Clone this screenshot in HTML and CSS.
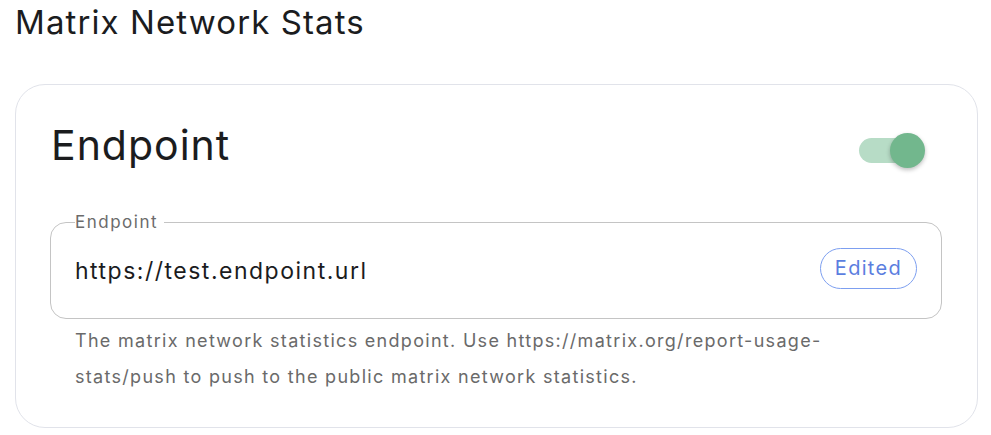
FILE: index.html
```html
<!DOCTYPE html>
<html lang="en">
<head>
  <meta charset="UTF-8" />
  <meta name="viewport" content="width=device-width, initial-scale=1.0"/>
  <title>Matrix Network Stats</title>
  <link rel="stylesheet" href="styles.css">
</head>
<body>
  <h1 class="page-title">Matrix Network Stats</h1>

  <div class="card">
    <div class="card-head">
      <h2>Endpoint</h2>
      <label class="switch">
        <input type="checkbox" checked />
        <span class="track"></span>
        <span class="thumb"></span>
      </label>
    </div>

    <fieldset class="field">
      <legend>Endpoint</legend>
      <div class="field-row">
        <span class="value">https://test.endpoint.url</span>
        <span class="chip">Edited</span>
      </div>
    </fieldset>
    <p class="helper">The matrix network statistics endpoint. Use https://matrix.org/report-usage-stats/push to push to the public matrix network statistics.</p>
  </div>
</body>
</html>
```

FILE: styles.css
```css
body {
  margin: 0;
  padding: 0 13px 0 15px;
  font-family: Inter, "Noto Sans", sans-serif;
  color: #1b1c1e;
  background: #fff;
}

.page-title {
  margin: 0;
  padding: 2px 0 0 0;
  font-size: 33px;
  font-weight: 400;
  line-height: 40px;
  letter-spacing: 1.1px;
}

.card {
  margin-top: 42px;
  border: 1px solid #e1e3ea;
  border-radius: 30px;
  padding: 24px 35px 32px 34px;
}

.card-head {
  display: flex;
  justify-content: space-between;
  align-items: center;
}

.card-head h2 {
  margin: 0;
  padding-left: 1px;
  font-size: 41px;
  font-weight: 400;
  line-height: 72px;
  letter-spacing: 1px;
}

.switch {
  position: relative;
  width: 66px;
  height: 36px;
  margin-right: 17px;
  margin-top: 12px;
}

.switch input {
  display: none;
}

.track {
  position: absolute;
  left: 0;
  top: 5px;
  width: 56px;
  height: 25px;
  border-radius: 13px;
  background: #b7dcc6;
}

.thumb {
  position: absolute;
  right: 0;
  top: 0;
  width: 35px;
  height: 35px;
  border-radius: 50%;
  background: #72b78d;
  box-shadow: 0 2px 4px rgba(0,0,0,0.25);
}

.field {
  margin: 31px 0 0 0;
  padding: 0 24px 0 24px;
  border: 1px solid #c4c4c4;
  border-radius: 16px;
  min-width: 0;
}

.field legend {
  padding: 0 6px 0 0;
  margin-left: 0;
  font-size: 17px;
  color: #6b6b6b;
  letter-spacing: 1.5px;
}

.field-row {
  display: flex;
  justify-content: space-between;
  align-items: center;
  height: 78px;
  padding-bottom: 8px;
}

.value {
  font-size: 23px;
  letter-spacing: 1.5px;
}

.chip {
  margin-bottom: 5px;
  border: 1px solid #7d9ff0;
  border-radius: 21px;
  padding: 0 14px;
  height: 39px;
  line-height: 39px;
  font-size: 20px;
  color: #5b7ee0;
  letter-spacing: 1.3px;
}

.helper {
  margin: 4px 0 0 0;
  padding: 0 60px 0 25px;
  font-size: 18px;
  line-height: 36px;
  color: #6a6a6a;
  letter-spacing: 1.3px;
}
```
